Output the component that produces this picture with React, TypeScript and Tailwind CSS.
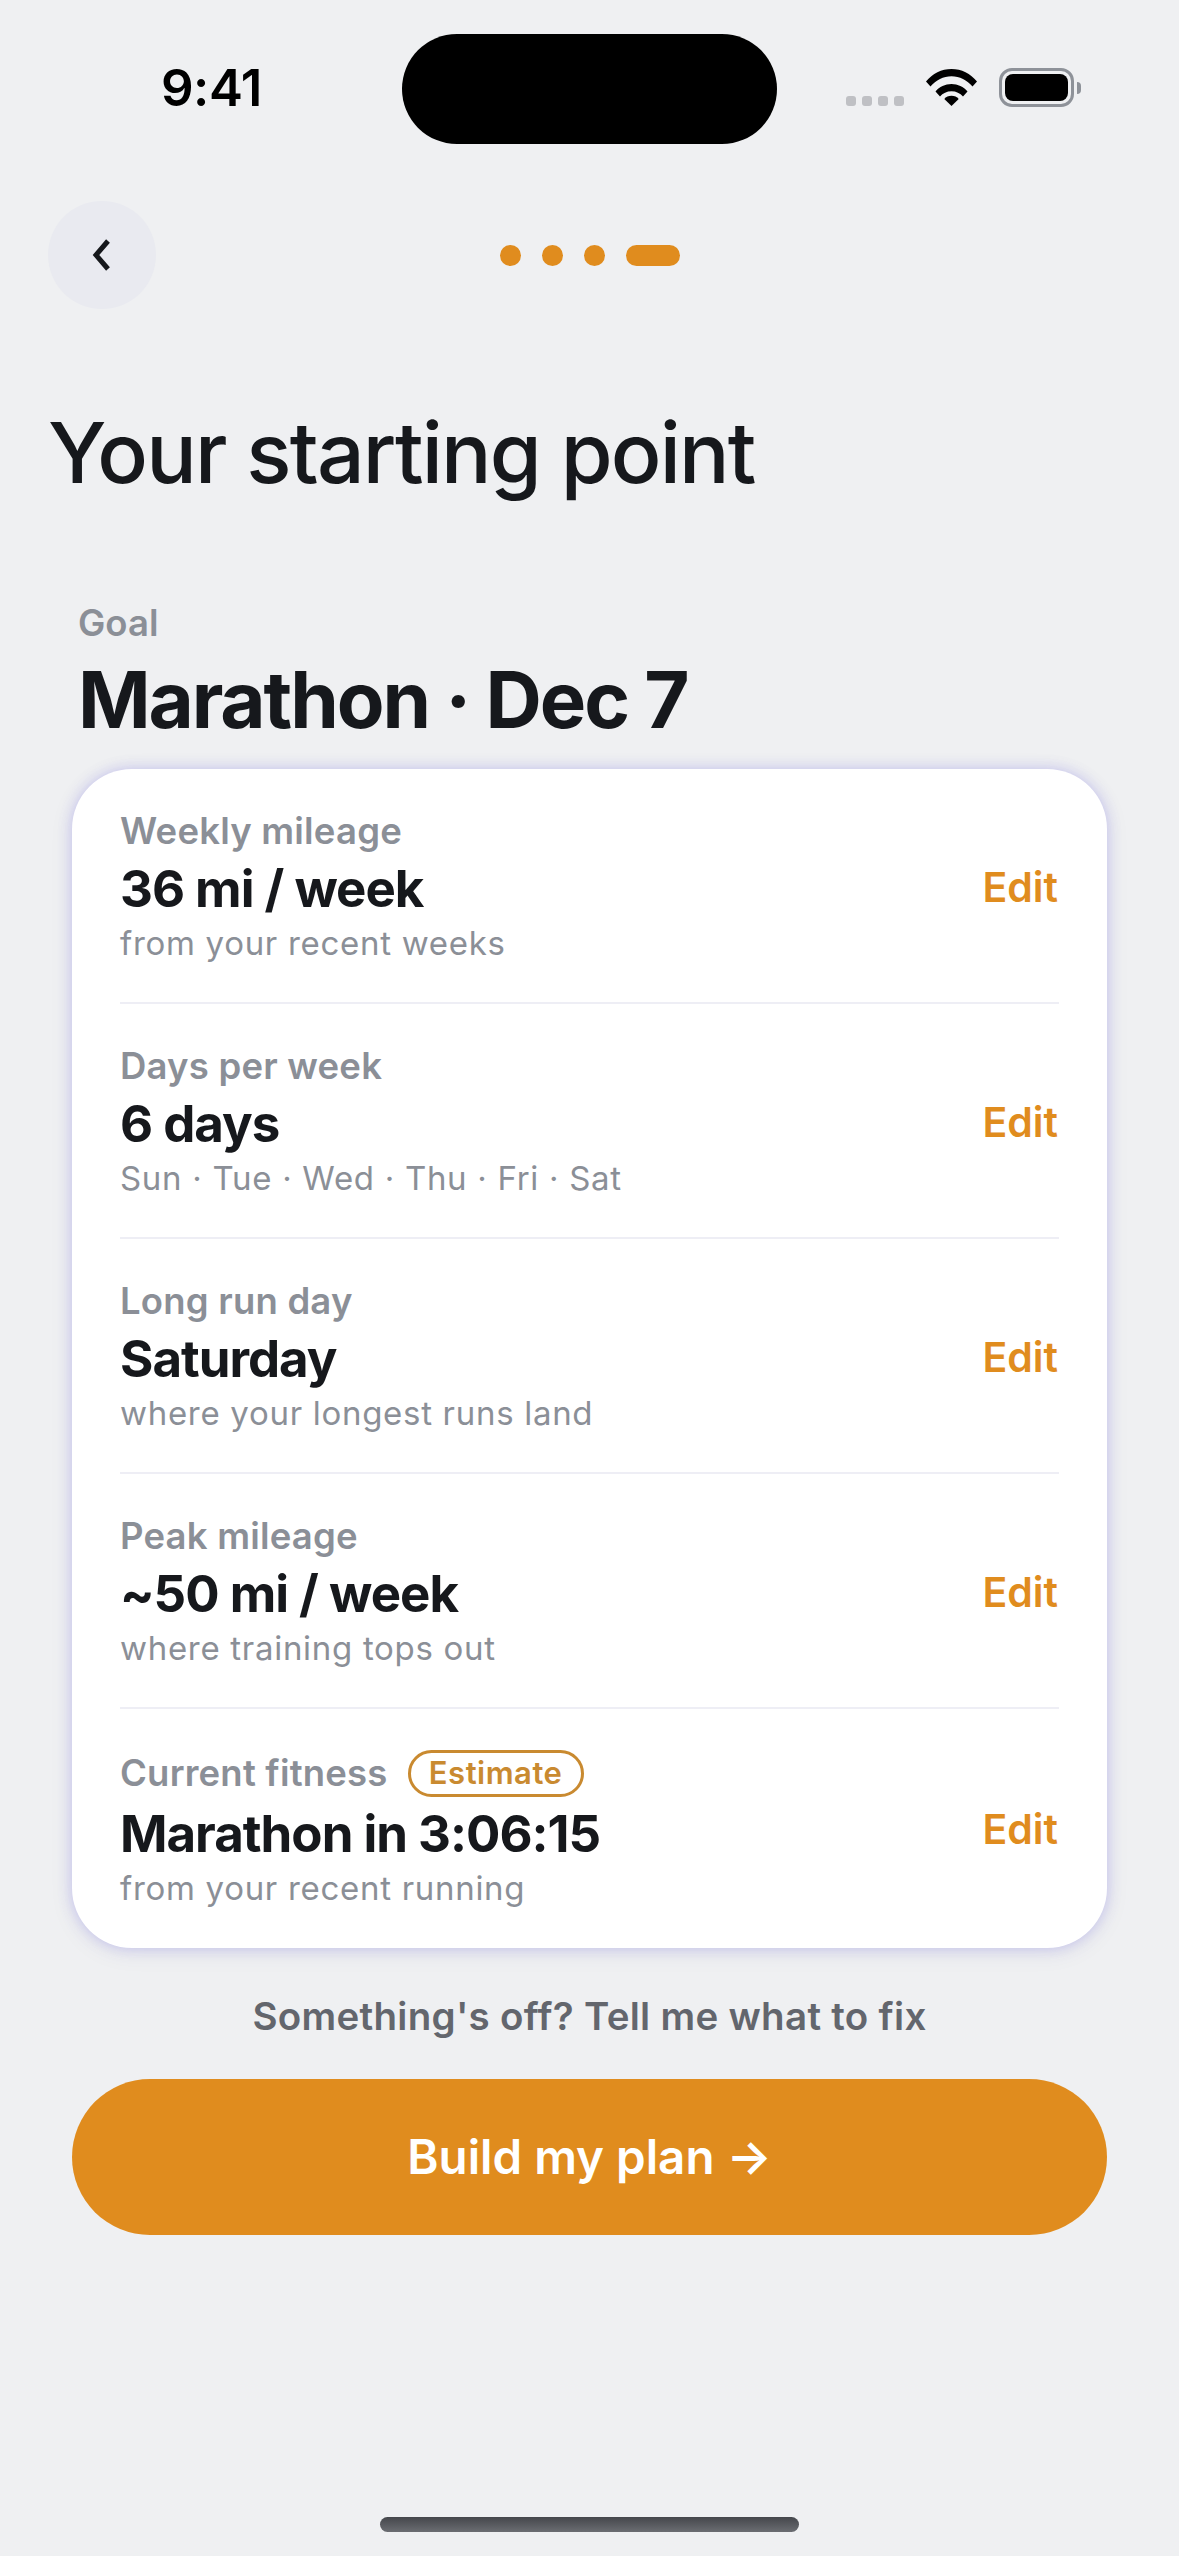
import React from "react";

const ROWS = [
  { label: "Weekly mileage", value: "36 mi / week", note: "from your recent weeks" },
  { label: "Days per week", value: "6 days", note: "Sun · Tue · Wed · Thu · Fri · Sat" },
  { label: "Long run day", value: "Saturday", note: "where your longest runs land" },
  { label: "Peak mileage", value: "~50 mi / week", note: "where training tops out" },
  { label: "Current fitness", value: "Marathon in 3:06:15", note: "from your recent running", badge: "Estimate" },
];

function StatusBar() {
  return (
    <div className="grid h-[144px] grid-cols-[402px_375px_1fr] items-end">
      <div className="flex h-[110px] items-start pl-[161px] pt-[24px]">
        <span className="text-[51px] font-semibold leading-[60px] tracking-[-0.5px] text-black">9:41</span>
      </div>
      <div className="h-[110px] rounded-[55px] bg-black" />
      <div className="flex h-[110px] items-start pl-[69px] pt-[34px]">
        <div className="mt-[28px] flex gap-[6px]">
          {[0, 1, 2, 3].map((i) => (
            <span key={i} className="h-[10px] w-[10px] rounded-[3px] bg-[#bfc0c4]" />
          ))}
        </div>
        <svg className="ml-[22px] mt-[1px]" width="51" height="37" viewBox="0 0 51 37" fill="#000">
          <path d="M0 12.5C6.5 4.6 15.5 0 25.5 0S44.5 4.6 51 12.500l-4.500 5C41 11 33.600 7.200 25.500 7.200S10 11 4.500 17.500z" />
          <path d="M9.500 22.500C13.400 17.800 19.200 15 25.500 15s12.100 2.800 16 7.500L37 27.500c-2.800-3.300-6.900-5.300-11.500-5.300S16.800 24.200 14 27.500z" />
          <path d="M18.300 30c1.700-2 4.300-3.200 7.200-3.200s5.500 1.200 7.200 3.200l-7.200 7z" />
        </svg>
        <div className="ml-[22px] flex items-center">
          <div className="flex h-[39px] w-[75px] items-center justify-center rounded-[13px] border-[3px] border-[#8e9299]">
            <div className="h-[27px] w-[63px] rounded-[8px] bg-black" />
          </div>
          <div className="ml-[3px] h-[12px] w-[4px] rounded-r-[4px] bg-[#8e9299]" />
        </div>
      </div>
    </div>
  );
}

function Row({ row, last }: { row: (typeof ROWS)[number]; last: boolean }) {
  return (
    <div className={last ? "flex h-[241px] items-center pb-[3px]" : "flex h-[235px] items-center border-b-[2px] border-[#eeeef5]"}>
      <div className="flex-1">
        <div className={last ? "flex h-[52px] items-center gap-[20px]" : "flex h-[48px] items-center gap-[20px]"}>
          <span className="text-[36.5px] font-semibold tracking-[0.2px] text-[#8b8f97]">{row.label}</span>
          {row.badge && (
            <span className="flex h-[47px] w-[176px] items-center justify-center rounded-full border-[3px] border-[#c98a30] text-[31px] font-semibold tracking-[0.5px] text-[#c98a30]">
              {row.badge}
            </span>
          )}
        </div>
        <div className="text-[51px] font-bold leading-[68px] tracking-[-1px] text-[#16181c]">{row.value}</div>
        <div className="text-[33px] leading-[41px] tracking-[0.7px] text-[#8b8f97]">{row.note}</div>
      </div>
      <span className="pr-[1px] pt-[4px] text-[41px] font-semibold text-[#e08c1e]">Edit</span>
    </div>
  );
}

export default function App() {
  return (
    <div className="relative h-[2556px] w-[1179px] overflow-hidden bg-[#eff0f2] font-['Inter',sans-serif]">
      <StatusBar />

      <div className="mt-[57px] grid grid-cols-[108px_1fr_108px] items-center px-[48px]">
        <button className="flex h-[108px] w-[108px] items-center justify-center rounded-full bg-[#e9eaf0]">
          <svg className="-ml-[2px]" width="24" height="36" viewBox="0 0 24 36" fill="none" stroke="#16181c" strokeWidth="5">
            <path d="M19 4 7 18l12 14" />
          </svg>
        </button>
        <div className="flex items-center justify-center gap-[21px]">
          <span className="h-[21px] w-[21px] rounded-full bg-[#e08c1e]" />
          <span className="h-[21px] w-[21px] rounded-full bg-[#e08c1e]" />
          <span className="h-[21px] w-[21px] rounded-full bg-[#e08c1e]" />
          <span className="h-[21px] w-[54px] rounded-full bg-[#e08c1e]" />
        </div>
      </div>

      <h1 className="mt-[94px] px-[48px] text-[84px] font-medium leading-[100px] tracking-[-1.8px] text-[#16181c]">
        Your starting point
      </h1>

      <div className="mt-[96px] px-[78px]">
        <div className="text-[36.5px] font-semibold leading-[48px] text-[#8b8f97]">Goal</div>
        <div className="mt-[5px] text-[78px] font-bold leading-[96px] tracking-[-2.1px] text-[#16181c]">Marathon · Dec 7</div>
      </div>

      <div className="mx-[72px] mt-[21px] h-[1179px] rounded-[60px] bg-white px-[48px] shadow-[0_0_14px_rgba(110,100,240,0.3),0_4px_24px_rgba(60,60,110,0.08)]">
        {ROWS.map((row, i) => (
          <Row key={row.label} row={row} last={i === ROWS.length - 1} />
        ))}
      </div>

      <div className="mt-[44px] text-center text-[38.5px] font-semibold leading-[48px] tracking-[0.3px] text-[#63666d]">
        Something's off? Tell me what to fix
      </div>

      <button className="mx-[72px] mt-[39px] flex h-[156px] w-[1035px] items-center justify-center rounded-full bg-[#e08c1e] text-[47.5px] font-semibold text-white">
        Build my plan →
      </button>

      <div className="absolute bottom-[24px] left-[380px] h-[15px] w-[419px] rounded-full bg-gradient-to-b from-[#45474c] to-[#6b6d72]" />
    </div>
  );
}
